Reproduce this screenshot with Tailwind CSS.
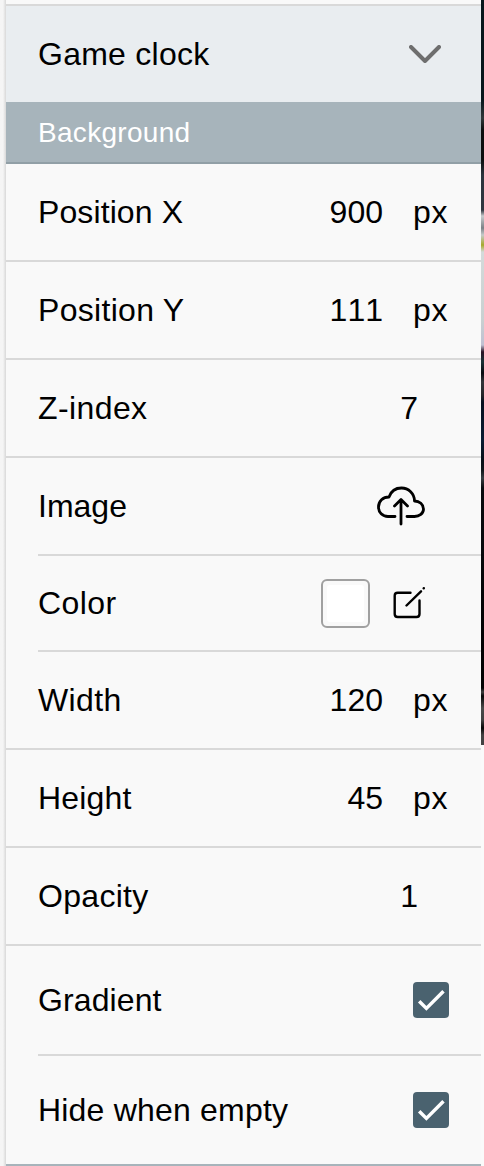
<!DOCTYPE html>
<html lang="en">
<head>
<meta charset="utf-8">
<title>Game clock settings</title>
<script src="https://cdn.jsdelivr.net/npm/@tailwindcss/browser@4"></script>
</head>
<body class="flex h-[1166px] w-[484px] overflow-hidden bg-white font-['Liberation_Sans',Arial,sans-serif] text-[32px] leading-[36px] text-black">
  <div class="w-1.5 shrink-0 bg-linear-to-r from-[#f5f5f5] from-50% to-[#d8d8d8]"></div>
  <main class="flex w-[475px] shrink-0 flex-col bg-[#f9f9f9]">
    <div class="h-1.5 shrink-0 border-b-2 border-[#d9d9d9]"></div>
    <header class="flex h-24 shrink-0 items-center justify-between bg-[#e9edf0] pr-10 pl-8">
      <h1 class="tracking-[0.25px]">Game clock</h1>
      <svg class="h-[18px] w-8" viewBox="0 0 32 18" fill="none" stroke="#6e6e6e" stroke-width="4" stroke-linecap="round" stroke-linejoin="round"><path d="M2 2l14 14L30 2"/></svg>
    </header>
    <h2 class="flex h-[62px] shrink-0 items-center border-b-2 border-[#919fa6] bg-[#a7b4bb] pt-0.5 pl-8 text-[28px] tracking-[0.3px] text-white">Background</h2>
    <div class="flex h-[98px] shrink-0 items-center border-b-2 border-[#d9d9d9] pr-8 pl-8"><span class="grow tracking-[0.1px]">Position X</span><span>900</span><span class="ml-[30px] w-9 tracking-[0.8px]">px</span></div>
    <div class="flex h-[98px] shrink-0 items-center border-b-2 border-[#d9d9d9] pr-8 pl-8"><span class="grow tracking-[0.3px]">Position Y</span><span class="[font-kerning:none]">111</span><span class="ml-[30px] w-9 tracking-[0.8px]">px</span></div>
    <div class="flex h-[98px] shrink-0 items-center border-b-2 border-[#d9d9d9] pr-[63px] pl-8"><span class="grow tracking-[0.4px]">Z-index</span><span>7</span></div>
    <div class="ml-8 flex h-[98px] shrink-0 items-center border-b-2 border-[#d9d9d9] pr-14"><span class="grow">Image</span>
      <svg class="h-10 w-12" viewBox="0 0 48 40" fill="none" stroke="#000" stroke-width="2.800" stroke-linecap="round" stroke-linejoin="round"><path d="M18 30.500H11C5.500 30.500 1.500 26.500 1.500 21C1.500 15 6 11 12 11C14 5.500 18.500 2 24.500 2C31.500 2 37.500 7.500 37.500 15C42.500 15 46.500 18.500 46.500 23C46.500 27.500 42.500 30.500 37.500 30.500H30M24 38V14M17.500 20L24 13.500L30.500 20"/></svg>
    </div>
    <div class="ml-8 flex h-24 shrink-0 items-center border-b-2 border-[#d9d9d9] pr-14"><span class="grow tracking-[0.4px]">Color</span>
      <span class="mr-[23px] size-[49px] rounded-md border-2 border-[#a0a0a0] p-1"><span class="block size-full rounded-[3px] bg-white"></span></span>
      <svg class="h-8 w-8" viewBox="0 0 32 32" fill="none" stroke="#000" stroke-width="2.400" stroke-linecap="round" stroke-linejoin="round"><path d="M17.500 5.800H4.700Q1.700 5.800 1.700 8.800V27Q1.700 30 4.700 30H23.500Q26.500 30 26.500 27V13.500M13.500 18.500L28 4.300M30.700 1.300L30.800 1.200"/></svg>
    </div>
    <div class="flex h-[98px] shrink-0 items-center border-b-2 border-[#d9d9d9] pr-8 pl-8"><span class="grow tracking-[0.4px]">Width</span><span>120</span><span class="ml-[30px] w-9 tracking-[0.8px]">px</span></div>
    <div class="flex h-[98px] shrink-0 items-center border-b-2 border-[#d9d9d9] pr-8 pl-8"><span class="grow tracking-[0.2px]">Height</span><span>45</span><span class="ml-[30px] w-9 tracking-[0.8px]">px</span></div>
    <div class="flex h-[98px] shrink-0 items-center border-b-2 border-[#d9d9d9] pr-[63px] pl-8"><span class="grow tracking-[0.3px]">Opacity</span><span>1</span></div>
    <div class="ml-8 flex h-[110px] shrink-0 items-center border-b-2 border-[#d9d9d9] pr-8"><span class="grow tracking-[0.1px]">Gradient</span>
      <svg class="size-9 rounded bg-[#4a626f]" viewBox="0 0 36 36" fill="none" stroke="#fff" stroke-width="3.500"><path d="M6.200 19.200L13.400 26.400L30.500 9.300"/></svg>
    </div>
    <div class="flex h-[110px] shrink-0 items-center border-b-2 border-[#a7b4bb] pr-8 pl-8"><span class="grow tracking-[0.2px]">Hide when empty</span>
      <svg class="size-9 rounded bg-[#4a626f]" viewBox="0 0 36 36" fill="none" stroke="#fff" stroke-width="3.500"><path d="M6.200 19.200L13.400 26.400L30.500 9.300"/></svg>
    </div>
  </main>
  <div class="w-[3px] shrink-0 bg-[#fafafa]">
    <div class="h-[745px] bg-[linear-gradient(#07171c_0,#07171c_100px,#30383a_118px,#0c0e0e_130px,#0c0e0e_160px,#2b343d_175px,#30363f_210px,#c8cbcd_216px,#7c8186_228px,#c5caca_235px,#a6a92b_245px,#d4dada_252px,#c9d0d1_320px,#bfc0d2_345px,#2a1325_352px,#183337_362px,#080a10_373px,#33353a_382px,#25262a_395px,#06101f_402px,#0a1c33_440px,#080f18_460px,#10151a_470px,#383d42_478px,#080b0e_488px,#070a0c_550px,#030405_600px,#020202_688px,#404040_692px,#080808_696px,#4a4a4a_708px,#404040_720px,#050505_728px,#424242_735px,#424242_745px)]"></div>
  </div>
</body>
</html>
